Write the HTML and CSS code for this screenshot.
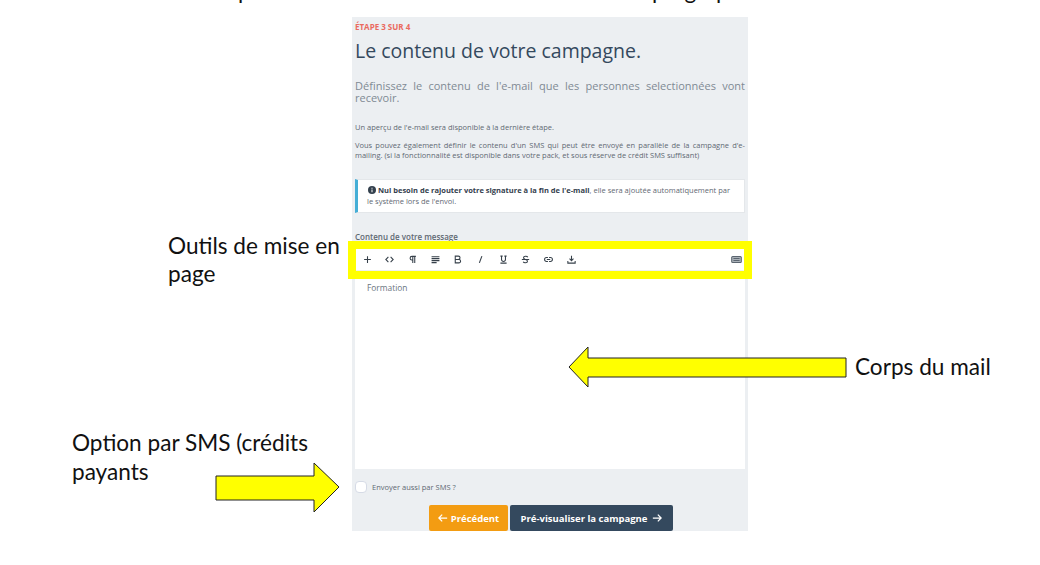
FILE: index.html
```html
<!DOCTYPE html>
<html>
<head>
  <meta name="viewport" content="width=device-width, initial-scale=1.0">
  <title>Le contenu de votre campagne</title>
  <link rel="stylesheet" href="styles.css">
</head>
<body>
  <div class="slide">
    <div class="panel">
      <div class="step">ÉTAPE 3 SUR 4</div>
      <h1>Le contenu de votre campagne.</h1>
      <p class="lead">Définissez le contenu de l'e-mail que les personnes selectionnées vont recevoir.</p>
      <p class="small first">Un aperçu de l'e-mail sera disponible à la dernière étape.</p>
      <p class="small second">Vous pouvez également définir le contenu d'un SMS qui peut être envoyé en parallèle de la campagne d'e-mailing. (si la fonctionnalité est disponible dans votre pack, et sous réserve de crédit SMS suffisant)</p>
      <div class="notice">
        <svg class="info" viewBox="0 0 16 16"><circle cx="8" cy="8" r="8" fill="#33404d"/><rect x="7" y="7" width="2" height="5.5" fill="#fff"/><rect x="7" y="3.5" width="2" height="2" fill="#fff"/></svg>
        <b>Nul besoin de rajouter votre signature à la fin de l'e-mail</b>, elle sera ajoutée automatiquement par le système lors de l'envoi.
      </div>
      <label class="field-label">Contenu de votre message</label>
      <div class="toolbar">
        <svg class="tool" viewBox="0 0 16 16"><path d="M8 2v12M2 8h12"/></svg>
        <svg class="tool" viewBox="0 0 16 16"><path d="M6 3.500 1.500 8 6 12.500M10 3.500 14.500 8 10 12.500"/></svg>
        <svg class="tool" viewBox="0 0 16 16"><path d="M14 2.500H7a3 3 0 0 0 0 6.500h2M8.500 2.500V14M12 2.500V14"/></svg>
        <svg class="tool" viewBox="0 0 16 16"><path d="M1 3h14M1 6.500h14M1 10h14M1 13.500h9"/></svg>
        <svg class="tool" viewBox="0 0 16 16"><path d="M4 2h5.500a3 3 0 0 1 0 6H4h6.500a3 3 0 0 1 0 6H4zM4 2v12"/></svg>
        <svg class="tool" viewBox="0 0 16 16"><path d="M10.500 2 6 14"/></svg>
        <svg class="tool" viewBox="0 0 16 16"><path d="M4.500 2v6a3.500 3.500 0 0 0 7 0V2M2.500 14.500h11M2.500 2h4M9.500 2h4"/></svg>
        <svg class="tool" viewBox="0 0 16 16"><path d="M1.500 8h13M12 4C11 1.500 4.500 1.500 4.500 5c0 2 2 2.500 3.500 3 2 .5 3.500 1 3.500 3 0 3.500-6.500 3.500-7.500 1"/></svg>
        <svg class="tool" viewBox="0 0 16 16"><path d="M7 4.500H4.500a3.500 3.500 0 0 0 0 7H7M9 4.500h2.500a3.500 3.500 0 0 1 0 7H9M5 8h6"/></svg>
        <svg class="tool" viewBox="0 0 16 16"><path d="M8 1.500V10M4.500 6.500 8 10l3.500-3.500M1.500 10.500v4h13v-4"/></svg>
        <svg class="tool keyboard" viewBox="0 0 16 16"><rect x="1" y="3.500" width="14" height="9" rx="1.500"/><path d="M3.500 6.500h9M3.500 9.500h9"/></svg>
      </div>
      <div class="editor">Formation</div>
      <label class="sms"><span class="checkbox"></span>Envoyer aussi par SMS ?</label>
      <div class="actions">
        <button class="btn prev"><svg class="arrow before" viewBox="0 0 12 12"><path d="M11 6H1M5 2 1 6l4 4"/></svg>Précédent</button>
        <button class="btn next">Pré-visualiser la campagne<svg class="arrow after" viewBox="0 0 12 12"><path d="M1 6h10M7 2l4 4-4 4"/></svg></button>
      </div>
    </div>

    <div class="note note-tools">Outils de mise en page</div>
    <div class="note note-body">Corps du mail</div>
    <div class="note note-sms">Option par SMS (crédits payants</div>
    <div class="cut-line cut-left">p</div>
    <div class="cut-line cut-right">p g p</div>

    <div class="highlight"></div>
    <svg class="shape arrow-left" viewBox="0 0 280 42"><polygon points="1,21 20,1 20,12 278,12 278,31 20,31 20,41"/></svg>
    <svg class="shape arrow-right" viewBox="0 0 126 52"><polygon points="1,14 99,14 99,1 124,25 99,50 99,38 1,38"/></svg>
  </div>
</body>
</html>
```

FILE: styles.css
```css
html, body {
  margin: 0;
  padding: 0;
  background: #fff;
}

.slide {
  position: relative;
  width: 1040px;
  height: 565px;
  overflow: hidden;
  font-family: "Open Sans", sans-serif;
}

.panel {
  position: absolute;
  top: 17px;
  left: 352px;
  width: 396px;
  height: 514px;
  box-sizing: border-box;
  padding: 5px 3px 0;
  background: #ecEff2;
  color: #555f69;
}

.step {
  font-size: 8px;
  font-weight: 700;
  line-height: 10px;
  color: #ea6a5f;
}

h1 {
  margin: 7px 0 0;
  font-size: 19.500px;
  font-weight: 400;
  line-height: 24px;
  color: #34495e;
}

.lead {
  margin: 17px 0 0;
  font-size: 11px;
  line-height: 12px;
  color: #7f8a94;
  text-align: justify;
}

.small {
  font-size: 7.500px;
  line-height: 10.500px;
  color: #5f6973;
  text-align: justify;
}

.first {
  margin: 18px 0 0;
}

.second {
  margin: 7px 0 0;
}

.notice {
  margin-top: 18px;
  padding: 5px 8px 5px 9px;
  background: #fff;
  border: 1px solid #e4e7ea;
  border-left: 3px solid #45aed6;
  font-size: 7.500px;
  line-height: 11px;
  color: #5f6973;
}

.notice b {
  color: #33404d;
}

.info {
  width: 8px;
  height: 8px;
  vertical-align: -1px;
  margin-left: 1px;
}

.field-label {
  display: block;
  margin-top: 18px;
  font-size: 8px;
  font-weight: 600;
  line-height: 12px;
  color: #5f6973;
}

.toolbar {
  display: flex;
  align-items: center;
  gap: 13.700px;
  height: 22px;
  box-sizing: border-box;
  margin-top: 5px;
  padding: 1px 3px 0 7.500px;
  background: #fff;
}

.tool {
  width: 9px;
  height: 9px;
  flex: none;
  fill: none;
  stroke: #36404a;
  stroke-width: 1.900;
}

.keyboard {
  width: 11px;
  height: 11px;
  margin-left: auto;
  fill: #aab1b8;
  stroke: #5b6570;
  stroke-width: 1.500;
}

.editor {
  height: 191px;
  box-sizing: border-box;
  margin-top: 8px;
  padding: 4px 12px;
  background: #fff;
  font-size: 8.400px;
  line-height: 12px;
  color: #6b7580;
}

.sms {
  display: flex;
  align-items: center;
  gap: 5px;
  margin-top: 12px;
  font-size: 7.500px;
  line-height: 12px;
  color: #5f6973;
}

.checkbox {
  width: 12px;
  height: 12px;
  box-sizing: border-box;
  background: #fff;
  border: 1px solid #d6dbe6;
  border-radius: 4px;
}

.actions {
  display: flex;
  justify-content: center;
  gap: 2px;
  margin-top: 12px;
  padding-left: 2px;
}

.btn {
  height: 26px;
  padding: 1px 0 0;
  border: none;
  border-radius: 2px;
  color: #fff;
  font-family: "Open Sans", sans-serif;
  font-size: 9.500px;
  font-weight: 700;
}

.prev {
  width: 79px;
  background: #f39c12;
}

.next {
  width: 163px;
  background: #34495e;
}

.arrow {
  width: 10px;
  height: 10px;
  vertical-align: -1.500px;
  fill: none;
  stroke: #fff;
  stroke-width: 1.500;
}

.before {
  margin-right: 3px;
}

.after {
  margin-left: 5px;
}

.note {
  position: absolute;
  font-family: Lato, sans-serif;
  font-size: 22.600px;
  line-height: 28px;
  color: #111;
}

.note-tools {
  top: 232px;
  left: 168px;
  width: 180px;
}

.note-body {
  top: 353px;
  left: 855px;
}

.note-sms {
  top: 428px;
  left: 72px;
  width: 270px;
  line-height: 29px;
}

.cut-line {
  position: absolute;
  top: -21px;
  font-family: Lato, sans-serif;
  font-size: 22.600px;
  line-height: 24px;
  color: #111;
}

.cut-left {
  left: 238px;
}

.cut-right {
  left: 652px;
  word-spacing: 14px;
}

.highlight {
  position: absolute;
  top: 241px;
  left: 348px;
  width: 404px;
  height: 38px;
  box-sizing: border-box;
  border: 8px solid #ffff00;
}

.shape {
  position: absolute;
  fill: #ffff00;
  stroke: #222;
  stroke-width: 1;
}

.arrow-left {
  top: 346px;
  left: 568px;
  width: 280px;
  height: 42px;
}

.arrow-right {
  top: 462px;
  left: 215px;
  width: 126px;
  height: 52px;
}
```
